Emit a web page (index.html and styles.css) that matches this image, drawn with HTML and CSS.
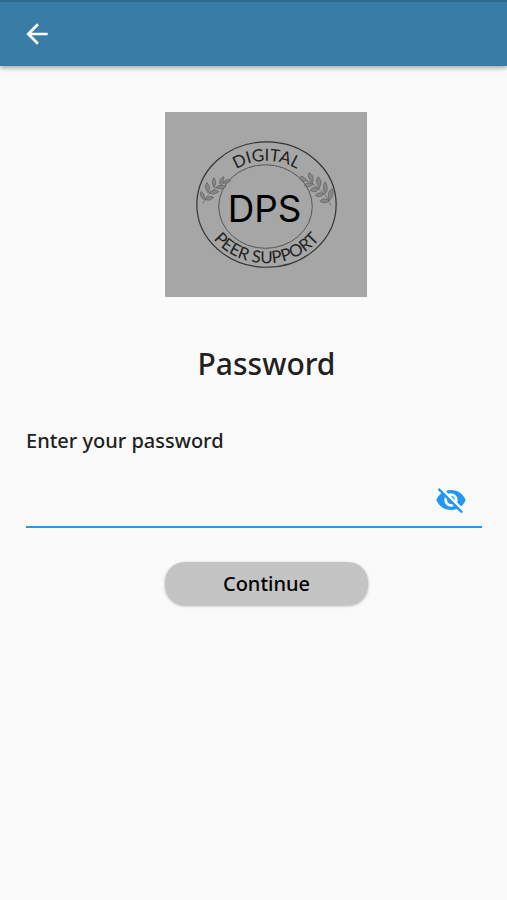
FILE: index.html
```
<!DOCTYPE html>
<html lang="en">
<head>
  <meta charset="utf-8">
  <meta name="viewport" content="width=device-width, initial-scale=1">
  <title>Password</title>
  <link rel="stylesheet" href="styles.css">
</head>
<body>
  <header class="app-bar">
    <button type="button" class="icon-button" aria-label="Back">
      <svg viewBox="0 0 24 24" width="32" height="32" fill="currentColor">
        <path d="M20 11H7.83l5.59-5.59L12 4l-8 8 8 8 1.41-1.41L7.83 13H20v-2z"/>
      </svg>
    </button>
  </header>

  <main class="content">
    <svg class="logo" viewBox="0 0 203 186" role="img" aria-label="Digital Peer Support">
      <defs>
        <path id="arcTop" d="M48 98a54 49 0 0 1 108 0"/>
        <path id="arcBottom" d="M36 93a66 59 0 0 0 132 0"/>
      </defs>
      <rect width="203" height="186" fill="#a6a6a6"/>
      <ellipse class="ring" cx="102" cy="93" rx="70" ry="63"/>
      <ellipse class="ring inner" cx="101" cy="95" rx="47" ry="42"/>
      <text class="ring-text"><textPath href="#arcTop" startOffset="50%">DIGITAL</textPath></text>
      <text class="ring-text"><textPath href="#arcBottom" startOffset="50%">PEER SUPPORT</textPath></text>
      <text class="initials" x="100" y="111">DPS</text>
      <!-- laurel branches -->
      <g class="branch">
        <path d="M38 92Q44 78 62 70"/>
        <path d="M39 88Q34 84 36 80Q41 83 39 88zM43 81Q39 75 42 71Q47 76 43 81zM49 76Q46 70 49 66Q53 71 49 76zM55 72Q54 67 59 65Q60 70 55 72zM40 88Q45 83 49 86Q45 90 40 88zM44 81Q51 77 54 80Q50 84 44 81zM51 76Q57 72 61 75Q57 79 51 76zM58 71Q63 66 66 69Q63 73 58 71z"/>
      </g>
      <g class="branch">
        <path d="M136 66Q159 75 167 94"/>
        <path d="M143 69Q137 62 135 66Q137 71 143 69zM148 71Q142 65 145 61Q151 65 148 71zM155 76Q150 69 154 65Q159 70 155 76zM161 82Q157 76 161 70Q165 77 161 82zM165 89Q162 81 168 77Q171 83 165 89zM149 72Q142 70 140 74Q145 77 149 72zM155 77Q148 74 146 79Q151 82 155 77zM160 82Q153 80 151 84Q156 87 160 82zM165 89Q158 85 156 90Q161 93 165 89z"/>
      </g>
    </svg>

    <h1 class="title">Password</h1>

    <form class="password-form" onsubmit="return false;">
      <label class="field-label" for="password">Enter your password</label>
      <div class="field">
        <input type="password" id="password" name="password" class="field-input" autocomplete="off">
        <button type="button" class="icon-button toggle" id="toggle" aria-label="Show password">
          <svg viewBox="0 0 24 24" width="32" height="32" fill="currentColor">
            <path d="M12 7c2.76 0 5 2.24 5 5 0 .65-.13 1.26-.36 1.83l2.92 2.92c1.51-1.26 2.7-2.89 3.43-4.75-1.73-4.39-6-7.5-11-7.5-1.4 0-2.74.25-3.98.7l2.16 2.16C10.74 7.13 11.35 7 12 7zM2 4.27l2.28 2.28.46.46C3.08 8.3 1.78 10.02 1 12c1.73 4.39 6 7.5 11 7.5 1.55 0 3.03-.3 4.38-.84l.42.42L19.73 22 21 20.73 3.27 3 2 4.27zM7.53 9.8l1.55 1.55c-.05.21-.08.43-.08.65 0 1.66 1.34 3 3 3 .22 0 .44-.03.65-.08l1.55 1.55c-.67.33-1.41.53-2.2.53-2.76 0-5-2.24-5-5 0-.79.2-1.53.53-2.2zm4.31-.78l3.15 3.15.02-.16c0-1.66-1.34-3-3-3l-.17.01z"/>
          </svg>
        </button>
      </div>
      <button type="submit" class="continue">Continue</button>
    </form>
  </main>

  <script>
    document.getElementById('toggle').addEventListener('click', function () {
      const input = document.getElementById('password');
      input.type = input.type === 'password' ? 'text' : 'password';
    });
  </script>
</body>
</html>
```

FILE: styles.css
```
* {
  box-sizing: border-box;
}
body {
  margin: 0;
  min-height: 100vh;
  background: #fafafa;
  color: #212121;
  font-family: "Noto Sans", "Open Sans", sans-serif;
}
.app-bar {
  display: flex;
  align-items: center;
  height: 66px;
  padding: 0 21px;
  border-top: 2px solid #30698f;
  background: #397ca6;
  color: #fff;
  box-shadow: 0 2px 5px rgba(0, 0, 0, 0.35);
}
.icon-button {
  display: flex;
  padding: 0;
  border: none;
  background: none;
  color: inherit;
  cursor: pointer;
}
.content {
  display: flex;
  flex-direction: column;
  align-items: center;
  padding: 46px 0 0 26px;
}
.logo {
  display: block;
  width: 42%;
}
.ring {
  fill: none;
  stroke: #333;
  stroke-width: 1.2;
}
.ring.inner {
  stroke: #555;
  stroke-width: 1;
}
.ring-text {
  font-family: Lato, sans-serif;
  font-size: 17px;
  text-anchor: middle;
  fill: #222;
}
.initials {
  font-family: Inter, sans-serif;
  font-size: 37px;
  text-anchor: middle;
  fill: #000;
}
.branch {
  fill: #888;
  stroke: #5c5c5c;
  stroke-width: 0.7;
}
.branch path:first-child {
  fill: none;
}
.title {
  margin: 45px 0 0;
  font-size: 30px;
  font-weight: 500;
  line-height: 44px;
}
.password-form {
  display: flex;
  flex-direction: column;
  align-items: center;
  width: 100%;
  margin-top: 40px;
}
.field-label {
  align-self: flex-start;
  font-size: 20px;
  font-weight: 500;
  line-height: 30px;
}
.field {
  display: flex;
  align-items: center;
  align-self: stretch;
  height: 72px;
  margin-right: 25px;
  padding: 18px 15px 0 0;
  border-bottom: 2px solid #2196f3;
}
.field-input {
  flex: 1;
  min-width: 0;
  height: 40px;
  padding: 0;
  border: none;
  outline: none;
  background: none;
  font: inherit;
  font-size: 20px;
}
.toggle {
  color: #2196f3;
}
.continue {
  width: 42%;
  height: 43px;
  margin-top: 34px;
  border: none;
  border-radius: 20px;
  background: #c4c4c4;
  color: #000;
  font-family: inherit;
  font-size: 20px;
  font-weight: 500;
  box-shadow: 0 1px 3px rgba(0, 0, 0, 0.3);
  cursor: pointer;
}
```
